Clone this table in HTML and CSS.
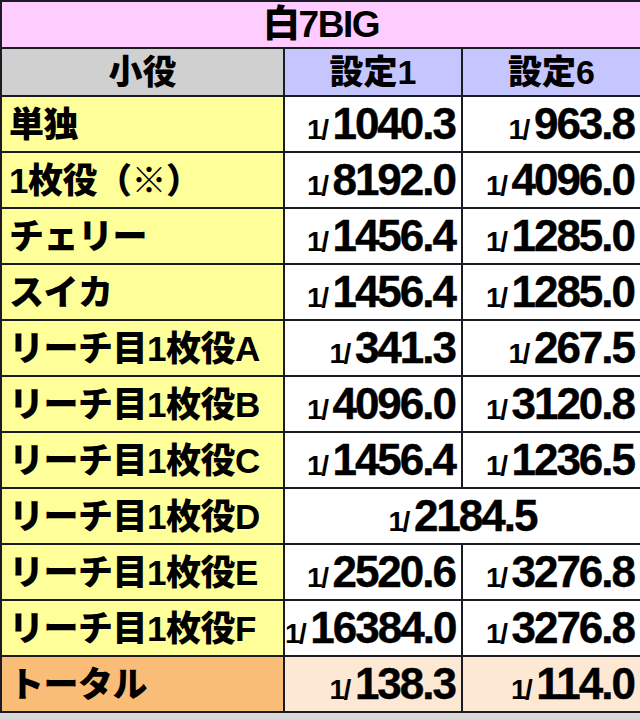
FILE: index.html
```html
<!DOCTYPE html>
<html lang="ja">
<head>
<meta charset="utf-8">
<link rel="stylesheet" href="styles.css">
</head>
<body>
<table class="tbl">
  <colgroup><col class="c1"><col class="c2"><col class="c3"></colgroup>
  <tr class="r-title"><th colspan="3" class="title">白7BIG</th></tr>
  <tr class="r-head"><th class="h-name">小役</th><th class="h-set">設定1</th><th class="h-set">設定6</th></tr>
  <tr><td class="name">単独</td><td class="val"><span class="pre">1/</span><span class="num">1040.3</span></td><td class="val"><span class="pre">1/</span><span class="num">963.8</span></td></tr>
  <tr><td class="name">1枚役（※）</td><td class="val"><span class="pre">1/</span><span class="num">8192.0</span></td><td class="val"><span class="pre">1/</span><span class="num">4096.0</span></td></tr>
  <tr><td class="name">チェリー</td><td class="val"><span class="pre">1/</span><span class="num">1456.4</span></td><td class="val"><span class="pre">1/</span><span class="num">1285.0</span></td></tr>
  <tr><td class="name">スイカ</td><td class="val"><span class="pre">1/</span><span class="num">1456.4</span></td><td class="val"><span class="pre">1/</span><span class="num">1285.0</span></td></tr>
  <tr><td class="name">リーチ目1枚役A</td><td class="val"><span class="pre">1/</span><span class="num">341.3</span></td><td class="val"><span class="pre">1/</span><span class="num">267.5</span></td></tr>
  <tr><td class="name">リーチ目1枚役B</td><td class="val"><span class="pre">1/</span><span class="num">4096.0</span></td><td class="val"><span class="pre">1/</span><span class="num">3120.8</span></td></tr>
  <tr><td class="name">リーチ目1枚役C</td><td class="val"><span class="pre">1/</span><span class="num">1456.4</span></td><td class="val"><span class="pre">1/</span><span class="num">1236.5</span></td></tr>
  <tr><td class="name">リーチ目1枚役D</td><td class="val merged" colspan="2"><span class="pre">1/</span><span class="num">2184.5</span></td></tr>
  <tr><td class="name">リーチ目1枚役E</td><td class="val"><span class="pre">1/</span><span class="num">2520.6</span></td><td class="val"><span class="pre">1/</span><span class="num">3276.8</span></td></tr>
  <tr><td class="name">リーチ目1枚役F</td><td class="val"><span class="pre">1/</span><span class="num">16384.0</span></td><td class="val"><span class="pre">1/</span><span class="num">3276.8</span></td></tr>
  <tr class="r-total"><td class="name total">トータル</td><td class="val total-val"><span class="pre">1/</span><span class="num">138.3</span></td><td class="val total-val"><span class="pre">1/</span><span class="num">114.0</span></td></tr>
</table>
</body>
</html>
```
FILE: styles.css
```css
html, body {
  margin: 0;
  padding: 0;
}
body {
  background: #d9d9d9;
  width: 640px;
  height: 719px;
  overflow: hidden;
}
.tbl {
  width: 640px;
  border-collapse: collapse;
  table-layout: fixed;
  font-family: "Liberation Sans", "Noto Sans CJK JP", sans-serif;
  font-weight: 700;
  color: #000;
  background: #fff;
}
.c1 { width: 283px; }
.c2 { width: 178px; }
.c3 { width: 179px; }
.tbl th, .tbl td {
  border: 2px solid #1b1b24;
  padding: 0;
  line-height: 1;
  white-space: nowrap;
  overflow: hidden;
}
.r-title th { height: 45px; }
.r-head th { height: 46px; }
.tbl tr td { height: 54px; }
.title {
  background: #ffccff;
  font-size: 37px;
  letter-spacing: -1.5px;
  text-align: center;
  font-weight: 900;
}
.h-name {
  background: #d0d0d0;
  font-size: 34px;
  text-align: center;
  font-weight: 900;
}
.h-set {
  background: #c6c6ff;
  font-size: 34px;
  text-align: center;
  font-weight: 900;
}
.name {
  background: #ffff99;
  font-size: 35px;
  text-align: left;
  padding-left: 7px !important;
  font-weight: 900;
  letter-spacing: -0.5px;
}
.name.total {
  background: #f9bd77;
}
.val {
  background: #fff;
  text-align: right;
  padding-right: 6px !important;
}
.val.merged {
  text-align: center;
  padding-right: 0 !important;
}
.total-val {
  background: #fde8d4;
}
.pre {
  font-size: 28px;
  letter-spacing: -1.5px;
  margin-right: 5px;
}
.num {
  font-size: 44px;
  letter-spacing: -2px;
  -webkit-text-stroke: 0.4px #000;
}
```
